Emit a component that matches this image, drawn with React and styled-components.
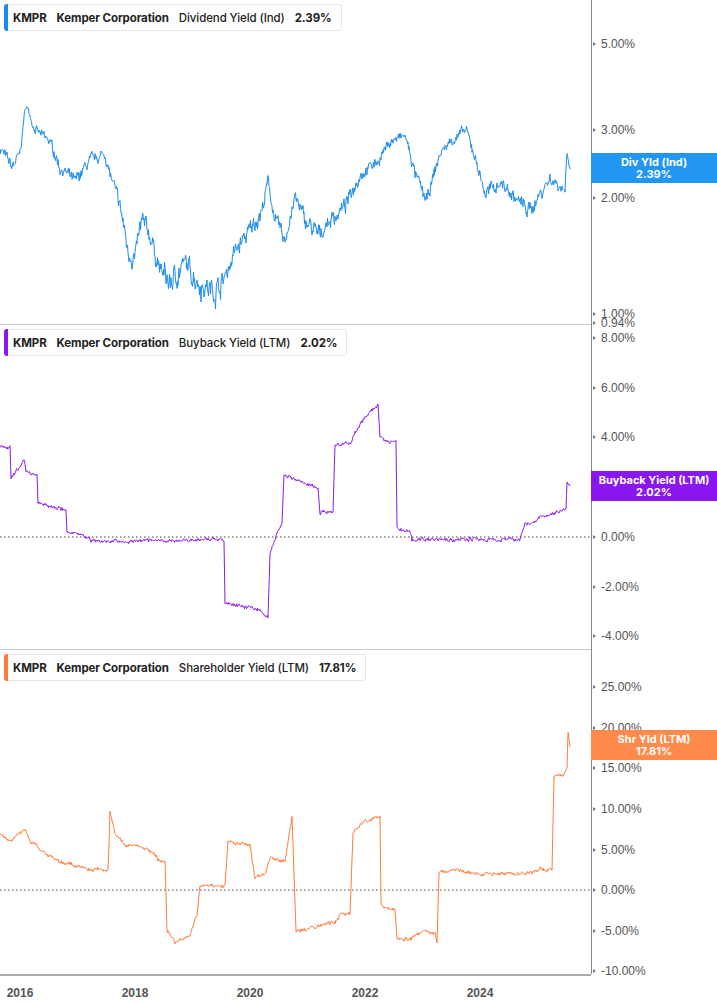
import React from "react";
import styled, { createGlobalStyle } from "styled-components";

const Global = createGlobalStyle`
  html, body { margin: 0; padding: 0; background: #fff; }
  body { font-family: Inter, "Noto Sans", sans-serif; }
`;

const Page = styled.div`
  width: 717px; height: 1005px; display: flex; flex-direction: column; overflow: hidden;
`;
const Panel = styled.div`
  position: relative; height: ${p => p.h}px; border-bottom: ${p => p.last ? "none" : "1px solid #c8c8c8"};
  box-sizing: border-box; width: 591px;
  overflow: visible;
`;
const Row = styled.div`display: flex; position: relative;`;
const Axis = styled.div`width: 126px; position: relative;`;
const Legend = styled.div`
  position: absolute; left: 4px; top: 4px; height: 25px; display: flex; align-items: center; gap: 10px;
  background: #fff; border: 1px solid #e6e6e6; border-radius: 3px; padding: 0 9px 0 8px;
  font-size: 11.5px; font-weight: 600; color: #222; z-index: 2; letter-spacing: -0.1px;
  &::before { content: ""; position: absolute; left: -1px; top: -1px; bottom: -1px; width: 4px; background: ${p => p.c}; border-radius: 3px 0 0 3px; }
`;
const Bold = styled.span`font-weight: 700;`;
const Norm = styled.span`font-weight: 500;`;
const Badge = styled.div`
  position: absolute; left: 0; right: 0; top: ${p => p.top}px; height: 30px; background: ${p => p.c};
  color: #fff; font-size: 11px; font-weight: 700; line-height: 12px; display: flex; flex-direction: column;
  align-items: center; justify-content: center; z-index: 2;
`;
const XAxis = styled.div`
  height: 31px; width: 591px; border-top: 2px solid #aaa; position: relative; box-sizing: border-box;
`;
const Year = styled.span`
  position: absolute; top: 10px; font-size: 12px; font-weight: 700; color: #555; transform: translateX(-50%);
  font-family: "Liberation Sans", Arial, sans-serif;
`;

function rng(seed) { let s = seed; return () => { s = (s * 16807) % 2147483647; return s / 2147483647; }; }

function series(pts, noise, seed, jitter) {
  const r = rng(seed); const out = [];
  let j = 0, n = 0;
  for (let x = pts[0][0]; x <= pts[pts.length - 1][0]; x += 0.5) {
    while (j < pts.length - 2 && x > pts[j + 1][0]) j++;
    const [x0, v0] = pts[j], [x1, v1] = pts[j + 1];
    const t = x1 === x0 ? 1 : Math.min(1, Math.max(0, (x - x0) / (x1 - x0)));
    n = n * 0.7 + (r() - 0.5) * noise;
    out.push([x, v0 + (v1 - v0) * t + n + (r() - 0.5) * jitter]);
  }
  return out;
}

const P1 = [[0,2.7],[12,2.4],[20,2.6],[26,3.5],[35,3.0],[50,2.8],[60,2.4],[75,2.2],[90,2.5],[105,2.6],[110,2.3],[120,1.9],[128,1.45],[135,1.4],[142,1.75],[150,1.6],[160,1.3],[170,1.2],[185,1.35],[200,1.2],[212,1.15],[222,1.2],[235,1.45],[250,1.65],[262,1.85],[268,2.2],[275,1.75],[285,1.55],[295,2.0],[305,1.75],[318,1.6],[330,1.75],[345,1.9],[360,2.3],[378,2.5],[390,2.8],[405,2.9],[415,2.3],[427,1.95],[440,2.6],[450,2.8],[466,3.0],[478,2.4],[485,2.05],[500,2.2],[515,2.0],[530,1.85],[540,2.05],[550,2.25],[565,2.1],[567,2.7],[570,2.39]];
const P2 = [[0,3.7],[10,3.6],[11,2.3],[24,3.1],[26,2.6],[37,2.5],[38,1.4],[50,1.2],[66,1.1],[67,0.2],[82,0.1],[95,-0.2],[224,-0.1],[225,-2.6],[258,-2.9],[268,-3.2],[270,-0.6],[282,0.6],[284,2.5],[295,2.3],[318,2.0],[320,1.0],[333,1.0],[335,3.7],[350,3.8],[360,4.5],[368,5.0],[378,5.3],[380,4.0],[390,3.8],[396,3.8],[397,0.3],[410,0.2],[412,-0.1],[520,-0.1],[525,0.5],[540,0.8],[555,1.0],[566,1.1],[567,2.2],[570,2.02]];
const P3 = [[0,7],[10,6],[25,7.5],[30,6],[40,5],[60,3.5],[75,3],[90,2.5],[108,2.5],[110,9.5],[115,7],[125,5.5],[140,5.5],[155,4.5],[160,3.5],[165,3.5],[167,-5],[175,-6.5],[183,-6],[190,-5.5],[197,-3],[200,0.5],[225,0.5],[228,6],[250,5.5],[255,1.5],[265,2],[270,4],[285,3.5],[292,9],[296,-5],[315,-4.5],[335,-4],[340,-3],[350,-3],[353,7],[365,8.5],[380,9],[381,-2],[395,-2.5],[397,-6],[410,-6],[425,-5],[435,-5.5],[437,-6.5],[439,2],[455,2.5],[480,2],[500,2],[520,2],[540,2.5],[552,2.5],[554,14],[563,14],[567,15],[568,19.5],[570,17.81]];

function pathOf(data, fy) { return data.map(([x, v], i) => `${i ? "L" : "M"}${x.toFixed(1)},${fy(v).toFixed(1)}`).join(""); }

const y1 = v => 314 - 116 * Math.log2(v);
const y2 = v => 212 - 24.85 * v;
const y3 = v => 240 - 8.13 * v;

function Ticks({ ticks, h }) {
  return (
    <svg width="126" height={h} style={{ display: "block", overflow: "visible" }}>
      <line x1="0.5" y1="0" x2="0.5" y2={h} stroke="#888" />
      {ticks.map(([y, t]) => (
        <g key={t}>
          <path d={`M2,${y - 2}L5,${y}L2,${y + 2}Z`} fill="#777" />
          <text x="10" y={y + 4} fontSize="12" fill="#555" fontFamily="Liberation Sans, Arial, sans-serif">{t}</text>
        </g>
      ))}
    </svg>
  );
}

const Chart = ({ d, color, zero, h }) => (
  <svg width="591" height={h} style={{ display: "block" }}>
    {zero != null && <line x1="0" x2="591" y1={zero} y2={zero} stroke="#444" strokeDasharray="1.5 2.5" />}
    <path d={d} fill="none" stroke={color} strokeWidth="1" strokeLinejoin="round" />
  </svg>
);

export default function App() {
  const d1 = pathOf(series(P1, 0.1, 7, 0.08), v => y1(Math.max(0.9, v)));
  const d2 = pathOf(series(P2, 0.1, 11, 0.06), y2);
  const d3 = pathOf(series(P3, 0.25, 5, 0.25), y3);
  const blue = "#1a8cf0", purple = "#8a16f0", orange = "#ff7a38";
  return (
    <Page>
      <Global />
      <Row>
        <Panel h={325}>
          <Legend c={blue}><Bold>KMPR</Bold><Bold>Kemper Corporation</Bold><Norm>Dividend Yield (Ind)</Norm><Bold>2.39%</Bold></Legend>
          <Chart d={d1} color={blue} h={324} />
        </Panel>
        <Axis>
          <Ticks h={325} ticks={[[44, "5.00%"], [130, "3.00%"], [198, "2.00%"], [314, "1.00%"], [323, "0.94%"]]} />
          <Badge c="#2196f3" top={153}><span>Div Yld (Ind)</span><span>2.39%</span></Badge>
        </Axis>
      </Row>
      <Row>
        <Panel h={325}>
          <Legend c={purple}><Bold>KMPR</Bold><Bold>Kemper Corporation</Bold><Norm>Buyback Yield (LTM)</Norm><Bold>2.02%</Bold></Legend>
          <Chart d={d2} color={purple} zero={212} h={324} />
        </Panel>
        <Axis>
          <Ticks h={325} ticks={[[13, "8.00%"], [63, "6.00%"], [112, "4.00%"], [212, "0.00%"], [262, "-2.00%"], [311, "-4.00%"]]} />
          <Badge c="#8a16f0" top={146}><span>Buyback Yield (LTM)</span><span>2.02%</span></Badge>
        </Axis>
      </Row>
      <Row>
        <Panel h={324} last>
          <Legend c={orange}><Bold>KMPR</Bold><Bold>Kemper Corporation</Bold><Norm>Shareholder Yield (LTM)</Norm><Bold>17.81%</Bold></Legend>
          <Chart d={d3} color={orange} zero={240} h={324} />
        </Panel>
        <Axis>
          <Ticks h={324} ticks={[[37, "25.00%"], [78, "20.00%"], [118, "15.00%"], [159, "10.00%"], [200, "5.00%"], [240, "0.00%"], [281, "-5.00%"], [321, "-10.00%"]]} />
          <Badge c="#ff8a4c" top={80}><span>Shr Yld (LTM)</span><span>17.81%</span></Badge>
        </Axis>
      </Row>
      <XAxis>
        {[["2016", 20], ["2018", 135], ["2020", 250], ["2022", 365], ["2024", 480]].map(([t, x]) => (
          <Year key={t} style={{ left: x }}>{t}</Year>
        ))}
      </XAxis>
    </Page>
  );
}
